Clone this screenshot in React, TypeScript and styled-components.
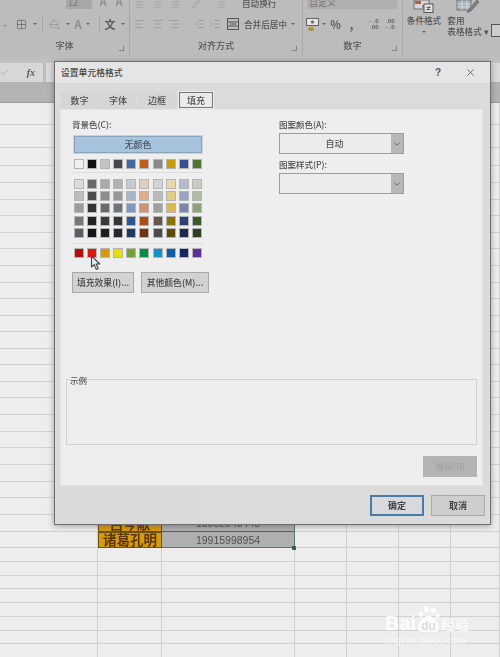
import React from "react";
import styled, { createGlobalStyle } from "styled-components";
import {
  Grid2x2, PaintBucket, AlignLeft, AlignCenter, AlignRight, IndentIncrease, IndentDecrease,
  ChevronDown, Check, X, AlignJustify, Pencil,
} from "lucide-react";

const Global = createGlobalStyle`
  html, body { margin: 0; padding: 0; background: #e8e8e8; }
  * { box-sizing: border-box; }
`;

const FONT = `"Noto Sans CJK SC", "Liberation Sans", sans-serif`;

const Page = styled.div`
  position: relative;
  width: 500px;
  height: 657px;
  overflow: hidden;
  font-family: ${FONT};
  background: #ececec;
`;
const Blurred = styled.div`
  width: 500px;
  height: 657px;
  filter: blur(0.5px);
  display: flex;
  flex-direction: column;
`;

/* ---------- ribbon ---------- */
const Ribbon = styled.div`
  height: 55px;
  display: flex;
  background: #bdbcbd;
  color: #5d5d5d;
  flex: none;
`;
const Group = styled.div<{ $w: number }>`
  position: relative;
  width: ${(p) => p.$w}px;
  flex: none;
  display: flex;
  flex-direction: column;
  border-right: 1px solid #a9a8a9;
`;
const TopRow = styled.div`
  height: 11px;
  display: flex;
  align-items: flex-end;
  overflow: hidden;
  padding-bottom: 2px;
`;
const MidRow = styled.div`
  height: 26px;
  display: flex;
  align-items: center;
`;
const GroupLabel = styled.div`
  height: 18px;
  font-size: 9px;
  line-height: 18px;
  text-align: center;
  color: #565656;
  font-weight: 500;
`;
const Launcher = styled.span`
  position: absolute;
  right: 5px;
  bottom: 4px;
  width: 5px;
  height: 5px;
  border-right: 1px solid #858585;
  border-bottom: 1px solid #858585;
`;
const Tool = styled.span<{ $w: number }>`
  width: ${(p) => p.$w}px;
  flex: none;
  display: inline-flex;
  align-items: center;
  justify-content: center;
  font-size: 11px;
  font-weight: 700;
  color: #5c5c5c;
`;
const Faint = styled(Tool)`
  color: #8d8d8d;
`;
const Decimal = styled.span`
  display: flex;
  flex-direction: column;
  align-items: flex-end;
  font-family: "Liberation Sans", sans-serif;
  font-size: 6px;
  line-height: 6px;
  font-weight: 700;
  color: #5c5c5c;
`;
const Caret = styled.span`
  width: 0;
  height: 0;
  flex: none;
  margin: 0 1px;
  border-left: 2px solid transparent;
  border-right: 2px solid transparent;
  border-top: 2px solid #666;
`;
const Divider = styled.span`
  width: 1px;
  height: 14px;
  background: #a5a4a5;
  flex: none;
`;
const MergeText = styled.span`
  font-size: 8.6px;
  font-weight: 500;
  color: #555;
  white-space: nowrap;
  margin: 0 3px;
`;
const FontBox = styled.span`
  width: 26px;
  height: 16px;
  margin-left: 66px;
  background: #a9a8a9;
  font-size: 9px;
  line-height: 20px;
  color: #777;
  padding-left: 2px;
  flex: none;
`;
const FormatBox = styled.span`
  width: 90px;
  height: 16px;
  margin-left: 4px;
  background: #b0afb0;
  font-size: 9px;
  line-height: 20px;
  color: #777;
  padding-left: 2px;
  flex: none;
`;
const StyleCol = styled.div<{ $w: number }>`
  width: ${(p) => p.$w}px;
  flex: none;
  display: flex;
  flex-direction: column;
  align-items: center;
  font-size: 8.6px;
  line-height: 11px;
  font-weight: 500;
  color: #555;
  white-space: nowrap;
`;
const StyleIcon = styled.div`
  height: 13px;
  display: flex;
  align-items: flex-end;
  margin-bottom: 2px;
  overflow: hidden;
`;
const StyleCaret = styled(Caret)`
  margin-top: 5px;
`;
const EdgeBox = styled.span`
  width: 12px;
  height: 13px;
  margin-top: 24px;
  border: 1.5px solid #555;
  background: #ccc;
  flex: none;
`;

/* ---------- formula bar ---------- */
const Gap = styled.div`
  height: 8px;
  flex: none;
  background: linear-gradient(#bdbcbd, #c4c3c4);
`;
const FormulaBar = styled.div`
  height: 19px;
  flex: none;
  display: flex;
  gap: 3px;
  background: #bdbcbd;
`;
const FormulaBox = styled.div`
  width: 43px;
  display: flex;
  align-items: center;
  justify-content: space-between;
  padding: 0 8px 0 0;
  background: #d8d7d8;
  color: #8c8c8c;
`;
const Fx = styled.span`
  font-family: "Liberation Serif", serif;
  font-style: italic;
  font-weight: 700;
  font-size: 10px;
  color: #555;
`;
const FormulaInput = styled.div`
  flex: 1;
  background: #dad9da;
`;
const ColumnHead = styled.div`
  height: 21px;
  flex: none;
  background: #b3b3b3;
  border-bottom: 1px solid #9c9c9c;
`;

/* ---------- sheet ---------- */
const Sheet = styled.div`
  flex: 1;
  background: #ededed;
  overflow: hidden;
`;
const Row = styled.div<{ $h: number }>`
  height: ${(p) => p.$h}px;
  display: grid;
  grid-template-columns: 98px 64px 133px 52px 52px 52px 49px;
  border-bottom: 1px solid #d2d2d2;
`;
const Cell = styled.div`
  border-right: 1px solid #d0d0d0;
  margin-bottom: -1px;
`;
const NameCell = styled.div`
  margin-bottom: -1px;
  background: #d69a0d;
  border: 1px solid #6d5110;
  display: flex;
  align-items: center;
  justify-content: center;
  font-size: 13.5px;
  font-weight: 700;
  line-height: 1;
  color: #5c3606;
  overflow: hidden;
`;
const PhoneCell = styled.div<{ $last?: boolean }>`
  margin-bottom: -1px;
  background: #b0afb0;
  border-right: 1px solid #4f7a6c;
  border-bottom: 1px solid ${(p) => (p.$last ? "#4f7a6c" : "#5a5a5a")};
  display: flex;
  align-items: center;
  justify-content: center;
  font-family: "Liberation Sans", sans-serif;
  font-size: 10.5px;
  color: #4f4f4f;
  overflow: hidden;
`;
const Handle = styled.span`
  position: absolute;
  left: 292px;
  top: 546px;
  width: 4px;
  height: 4px;
  background: #3f5f55;
`;

/* ---------- dialog ---------- */
const Dialog = styled.div`
  position: absolute;
  left: 54px;
  top: 61px;
  width: 437px;
  height: 464px;
  background: #dcdbdb;
  border: 1px solid #6f6f6f;
  box-shadow: 0 1px 6px rgba(60, 60, 60, 0.45);
  display: flex;
  flex-direction: column;
  filter: blur(0.5px);
  color: #4a4a4a;
`;
const TitleBar = styled.div`
  height: 21px;
  flex: none;
  display: flex;
  align-items: center;
  padding: 0 14px 0 6px;
  background: #e6e5e5;
  font-size: 8.8px;
  font-weight: 500;
  color: #444;
`;
const TitleText = styled.span`
  flex: 1;
`;
const HelpMark = styled.span`
  font-family: "Liberation Sans", sans-serif;
  font-size: 10px;
  font-weight: 700;
  color: #555;
  margin-right: 24px;
`;
const TabStrip = styled.div`
  height: 26px;
  flex: none;
  display: flex;
  align-items: flex-end;
  padding-left: 6px;
`;
const Tab = styled.div<{ $w: number; $active?: boolean }>`
  width: ${(p) => p.$w}px;
  height: ${(p) => (p.$active ? 16 : 18)}px;
  flex: none;
  margin: ${(p) => (p.$active ? "0 1px 1px 2px" : "0 1px 0 0")};
  display: flex;
  align-items: center;
  justify-content: center;
  font-size: 9px;
  font-weight: 500;
  color: #505050;
  background: ${(p) => (p.$active ? "#ebebeb" : "#d7d6d6")};
  border: ${(p) => (p.$active ? "1px solid #777" : "none")};
  outline: ${(p) => (p.$active ? "1px solid #ededed" : "none")};
`;
const Panel = styled.div`
  margin: 0 7px 0 5px;
  height: 377px;
  flex: none;
  background: #eeeeee;
  display: flex;
  flex-direction: column;
  padding: 7px 5px 0 5px;
  border: 1px solid #e4e4e4;
`;
const Columns = styled.div`
  height: 252px;
  flex: none;
  display: flex;
`;
const LeftCol = styled.div`
  width: 213px;
  flex: none;
  padding-left: 6px;
  display: flex;
  flex-direction: column;
`;
const RightCol = styled.div`
  flex: 1;
  display: flex;
  flex-direction: column;
`;
const FieldLabel = styled.div`
  height: 14px;
  font-size: 8.5px;
  line-height: 14px;
  font-weight: 500;
  color: #4d4d4d;
`;
const NoColor = styled.div`
  margin: 5px 0 0 2px;
  width: 128px;
  height: 17px;
  flex: none;
  background: #a6c4de;
  border: 1px solid #8ba6bc;
  outline: 1px solid #c8d3dc;
  display: flex;
  align-items: center;
  justify-content: center;
  font-size: 9px;
  font-weight: 500;
  color: #4b5560;
`;
const SwatchGrid = styled.div<{ $mt: number }>`
  display: grid;
  grid-template-columns: repeat(10, 10px);
  column-gap: 3.1px;
  row-gap: 2.2px;
  margin: ${(p) => p.$mt}px 0 0 2px;
`;
const Swatch = styled.span<{ $c: string }>`
  width: 10px;
  height: 10px;
  background: ${(p) => p.$c};
  border: 1px solid #b5b5b5;
`;
const Rule = styled.div<{ $mt: number }>`
  height: 1px;
  width: 131px;
  margin-top: ${(p) => p.$mt}px;
  background: #dddddd;
`;
const Buttons = styled.div`
  display: flex;
  gap: 7px;
  margin-top: 14px;
`;
const GreyButton = styled.div<{ $w: number }>`
  width: ${(p) => p.$w}px;
  height: 21px;
  flex: none;
  background: #d3d2d2;
  border: 1px solid #a9a9a9;
  display: flex;
  align-items: center;
  justify-content: center;
  font-size: 8.8px;
  font-weight: 500;
  color: #474747;
  white-space: nowrap;
`;
const Select = styled.div`
  width: 125px;
  height: 21px;
  flex: none;
  margin: 2px 0 3px;
  border: 1px solid #9d9d9d;
  background: #ececec;
  display: flex;
  font-size: 9px;
  font-weight: 500;
  color: #555;
`;
const SelectValue = styled.div`
  flex: 1;
  display: flex;
  align-items: center;
  justify-content: center;
  padding-right: 2px;
`;
const SelectArrow = styled.div`
  width: 12px;
  flex: none;
  background: #b8b7b7;
  display: flex;
  align-items: center;
  justify-content: center;
  color: #555;
`;
const Sample = styled.div`
  position: relative;
  height: 66px;
  margin-top: 10px;
  flex: none;
  border: 1px solid #d2d2d2;
  background: #eeeeee;
`;
const SampleLegend = styled.span`
  position: absolute;
  left: 3px;
  top: -6px;
  font-size: 8.5px;
  line-height: 12px;
  font-weight: 500;
  color: #555;
  background: #eeeeee;
`;
const ClearRow = styled.div`
  display: flex;
  justify-content: flex-end;
  margin-top: 11px;
`;
const ClearButton = styled.div`
  width: 54px;
  height: 21px;
  background: #b4b3b3;
  display: flex;
  align-items: center;
  justify-content: center;
  font-size: 9px;
  color: #a0a0a0;
`;
const Footer = styled.div`
  flex: 1;
  display: flex;
  justify-content: flex-end;
  align-items: flex-start;
  gap: 7px;
  padding: 9px 5px 0 0;
  background: linear-gradient(90deg, #dadada, #dcdbdb);
`;
const FootButton = styled.div<{ $primary?: boolean }>`
  width: 54px;
  height: 21px;
  background: ${(p) => (p.$primary ? "#d8d9dc" : "#cfcece")};
  border: ${(p) => (p.$primary ? "2px solid #4a7ba6" : "1px solid #a9a9a9")};
  display: flex;
  align-items: center;
  justify-content: center;
  font-size: 9px;
  font-weight: 700;
  color: #464646;
`;

/* ---------- overlays ---------- */
const Pointer = styled.svg`
  position: absolute;
  left: 90px;
  top: 255px;
  filter: blur(0.35px);
`;
const Mark = styled.div`
  position: absolute;
  left: 385px;
  top: 604px;
  width: 96px;
  color: rgba(255, 255, 255, 0.82);
  filter: blur(0.3px);
`;
const MarkTop = styled.div`
  display: flex;
  align-items: flex-end;
  height: 29px;
  font-family: "Liberation Sans", sans-serif;
  font-weight: 700;
  font-size: 20px;
  line-height: 20px;
`;
const PawWrap = styled.span`
  position: relative;
  display: inline-flex;
  width: 25px;
  height: 28px;
  flex: none;
  align-items: flex-end;
  justify-content: center;
`;
const PawGlyph = styled.svg`
  position: absolute;
  left: 0;
  top: 0;
`;
const PawText = styled.span`
  position: relative;
  font-size: 12px;
  line-height: 14px;
  color: #dcdcdc;
`;
const MarkCn = styled.span`
  font-family: ${FONT};
  font-size: 14px;
  line-height: 18px;
  font-weight: 500;
`;
const MarkUrl = styled.div`
  font-family: "Liberation Sans", sans-serif;
  font-size: 10px;
  line-height: 12px;
  color: rgba(255, 255, 255, 0.6);
  margin-top: 2px;
`;

/* ---------- data ---------- */
const THEME = ["#f0f0f0", "#111111", "#c3c3c3", "#44474c", "#41699f", "#c05f17", "#8a8a8a", "#c89b08", "#34508f", "#4f7434"];
const TINTS = [
  "#dcdcdc", "#6a6a6a", "#aaaaaa", "#b0b2b4", "#c6cbd2", "#e3cdbd", "#d4d4d4", "#ead9a8", "#b4bbcf", "#c6cfbe",
  "#bcbcbc", "#4c4c4c", "#8e8e8e", "#98999c", "#a9b5c5", "#e0ae8a", "#bbbbbb", "#e2cc80", "#9ba4c0", "#aebba0",
  "#9c9c9c", "#333333", "#6a6a6a", "#6f7278", "#7f98bf", "#d09270", "#a0a0a0", "#dab94e", "#7b85ad", "#8fa37a",
  "#777777", "#222222", "#3a3a3a", "#333539", "#2b5690", "#a84c0f", "#67554a", "#8a7005", "#2f3f75", "#3b5a2c",
  "#5a5f66", "#151515", "#1e1e1e", "#26282b", "#1f3c5e", "#70350c", "#4c4c4c", "#5c4b05", "#1f2850", "#2f3e25",
];
const STANDARD = ["#b50d0d", "#e31414", "#d99a0a", "#e8dc10", "#76a03a", "#0c8a48", "#1890c8", "#0a5fa8", "#142660", "#5c2f98"];

const ROW_LINES = [125, 148, 166, 183, 200, 216, 233, 249, 266, 283, 299, 316, 332, 349, 365, 382, 398, 415, 432, 448, 465, 482, 498, 515, 532, 548, 562, 576, 589, 603, 617, 631, 644, 658];
const ROWS = ROW_LINES.map((y, i) => y - (i === 0 ? 103 : ROW_LINES[i - 1]));

const Swatches = ({ colors, mt }: { colors: string[]; mt: number }) => (
  <SwatchGrid $mt={mt}>
    {colors.map((c, i) => (
      <Swatch key={i} $c={c} />
    ))}
  </SwatchGrid>
);

const MergeIcon = () => (
  <svg width="12" height="12" viewBox="0 0 12 12" fill="none" stroke="#555" strokeWidth="1">
    <rect x="0.5" y="0.5" width="11" height="11" />
    <path d="M0.5 4H11.5M0.5 8H11.5M3 6H9" />
  </svg>
);
const CurrencyIcon = () => (
  <svg width="13" height="13" viewBox="0 0 13 13">
    <rect x="0.5" y="0.5" width="12" height="7" fill="#e4e4e4" stroke="#666" />
    <circle cx="6.5" cy="4" r="1.6" fill="#666" />
    <ellipse cx="5" cy="10" rx="3" ry="1.4" fill="#b8a24a" />
    <ellipse cx="5" cy="11.6" rx="3" ry="1.2" fill="#a08c3a" />
  </svg>
);
const ConditionalIcon = () => (
  <svg width="22" height="13" viewBox="0 0 22 13">
    <rect x="1" y="0" width="15" height="9" fill="#d8d8d8" stroke="#6d6d6d" />
    <rect x="2" y="1" width="6" height="3" fill="#a8614a" />
    <rect x="9" y="5" width="6" height="3" fill="#8a94a8" />
    <rect x="11" y="4" width="9" height="8.5" fill="#e6e6e6" stroke="#555" />
    <path d="M14 10.5L17 6M13.5 7.5H17.5M13.5 9.5H17.5" stroke="#444" strokeWidth="0.8" />
  </svg>
);
const TableStyleIcon = () => (
  <svg width="24" height="13" viewBox="0 0 24 13">
    <rect x="1" y="0" width="14" height="10" fill="#a9b3c0" stroke="#727272" />
    <path d="M1 4H15M1 7H15M6 0V10M11 0V10" stroke="#e0e0e0" strokeWidth="0.7" />
    <path d="M21 0L13 9L11 12.5L15 11L23 2Z" fill="#7f7f7f" stroke="#5c5c5c" strokeWidth="0.6" />
  </svg>
);

export default function App() {
  return (
    <Page>
      <Global />
      <Blurred>
        <Ribbon>
          <Group $w={130}>
            <TopRow>
              <FontBox>12</FontBox>
              <Faint $w={22}>A</Faint>
              <Faint $w={10}>A</Faint>
            </TopRow>
            <MidRow>
              <Faint $w={10}>-</Faint>
              <Tool $w={22}><Grid2x2 size={11} strokeWidth={1.4} /></Tool>
              <Caret />
              <Faint $w={4} />
              <Divider />
              <Faint $w={22}><PaintBucket size={11} strokeWidth={1.3} /></Faint>
              <Caret />
              <Faint $w={14}>A</Faint>
              <Caret />
              <Faint $w={8} />
              <Divider />
              <Tool $w={20}>文</Tool>
              <Caret />
            </MidRow>
            <GroupLabel>字体</GroupLabel>
            <Launcher />
          </Group>
          <Group $w={173}>
            <TopRow>
              <Faint $w={18}><AlignJustify size={9} strokeWidth={1.2} /></Faint>
              <Faint $w={18}><AlignJustify size={9} strokeWidth={1.2} /></Faint>
              <Faint $w={18}><AlignJustify size={9} strokeWidth={1.2} /></Faint>
              <Faint $w={22}><Pencil size={9} strokeWidth={1.2} /></Faint>
              <Faint $w={33}><AlignLeft size={9} strokeWidth={1.2} /></Faint>
              <MergeText>自动换行</MergeText>
            </TopRow>
            <MidRow>
              <Faint $w={20}><AlignLeft size={12} strokeWidth={1.2} /></Faint>
              <Faint $w={16}><AlignCenter size={12} strokeWidth={1.2} /></Faint>
              <Faint $w={16}><AlignRight size={12} strokeWidth={1.2} /></Faint>
              <Faint $w={9} />
              <Faint $w={16}><IndentDecrease size={12} strokeWidth={1.2} /></Faint>
              <Faint $w={16}><IndentIncrease size={12} strokeWidth={1.2} /></Faint>
              <Faint $w={2} />
              <Tool $w={16}><MergeIcon /></Tool>
              <MergeText>合并后居中</MergeText>
              <Caret />
            </MidRow>
            <GroupLabel>对齐方式</GroupLabel>
            <Launcher />
          </Group>
          <Group $w={100}>
            <TopRow>
              <FormatBox>自定义</FormatBox>
            </TopRow>
            <MidRow>
              <Tool $w={18}><CurrencyIcon /></Tool>
              <Caret />
              <Tool $w={17}>%</Tool>
              <Tool $w={15}>,</Tool>
              <Faint $w={6} />
              <Tool $w={16}><Decimal><span>←.0</span><span>.00</span></Decimal></Tool>
              <Tool $w={16}><Decimal><span>.00</span><span>→.0</span></Decimal></Tool>
            </MidRow>
            <GroupLabel>数字</GroupLabel>
            <Launcher />
          </Group>
          <StyleCol $w={42}>
            <StyleIcon><ConditionalIcon /></StyleIcon>
            条件格式
            <StyleCaret />
          </StyleCol>
          <StyleCol $w={46}>
            <StyleIcon><TableStyleIcon /></StyleIcon>
            套用
            <br />
            表格格式 ▾
          </StyleCol>
          <EdgeBox />
        </Ribbon>
        <Gap />
        <FormulaBar>
          <FormulaBox>
            <Check size={9} strokeWidth={1.5} />
            <Fx>fx</Fx>
          </FormulaBox>
          <FormulaInput />
        </FormulaBar>
        <ColumnHead />
        <Sheet>
          {ROWS.map((h, i) => {
            const y = ROW_LINES[i];
            const isName = y === 532 || y === 548;
            return (
              <Row key={y} $h={h}>
                <Cell />
                {isName ? (
                  <NameCell>{y === 532 ? "吕岑献" : "诸葛孔明"}</NameCell>
                ) : (
                  <Cell />
                )}
                {isName ? (
                  <PhoneCell $last={y === 548}>{y === 532 ? "13552545445" : "19915998954"}</PhoneCell>
                ) : (
                  <Cell />
                )}
                <Cell />
                <Cell />
                <Cell />
                <Cell />
              </Row>
            );
          })}
        </Sheet>
      </Blurred>
      <Handle />

      <Dialog>
        <TitleBar>
          <TitleText>设置单元格格式</TitleText>
          <HelpMark>?</HelpMark>
          <X size={11} strokeWidth={1.6} />
        </TitleBar>
        <TabStrip>
          <Tab $w={37}>数字</Tab>
          <Tab $w={38}>字体</Tab>
          <Tab $w={38}>边框</Tab>
          <Tab $w={34} $active>填充</Tab>
        </TabStrip>
        <Panel>
          <Columns>
            <LeftCol>
              <FieldLabel>背景色(C):</FieldLabel>
              <NoColor>无颜色</NoColor>
              <Swatches colors={THEME} mt={6} />
              <Rule $mt={3} />
              <Swatches colors={TINTS} mt={6} />
              <Rule $mt={5} />
              <Swatches colors={STANDARD} mt={4} />
              <Buttons>
                <GreyButton $w={62}>填充效果(I)...</GreyButton>
                <GreyButton $w={68}>其他颜色(M)...</GreyButton>
              </Buttons>
            </LeftCol>
            <RightCol>
              <FieldLabel>图案颜色(A):</FieldLabel>
              <Select>
                <SelectValue>自动</SelectValue>
                <SelectArrow><ChevronDown size={10} strokeWidth={2} /></SelectArrow>
              </Select>
              <FieldLabel>图案样式(P):</FieldLabel>
              <Select>
                <SelectValue />
                <SelectArrow><ChevronDown size={10} strokeWidth={2} /></SelectArrow>
              </Select>
            </RightCol>
          </Columns>
          <Sample>
            <SampleLegend>示例</SampleLegend>
          </Sample>
          <ClearRow>
            <ClearButton>清除(R)</ClearButton>
          </ClearRow>
        </Panel>
        <Footer>
          <FootButton $primary>确定</FootButton>
          <FootButton>取消</FootButton>
        </Footer>
      </Dialog>

      <Pointer width="12" height="16" viewBox="0 0 12 16">
        <path d="M1.5 0.8 L1.5 12 L4.2 9.6 L6.2 14.4 L8.2 13.5 L6.2 9 L9.8 9 Z" fill="#e8e8e8" stroke="#444" strokeWidth="1.1" strokeLinejoin="round" />
      </Pointer>

      <Mark>
        <MarkTop>
          Bai
          <PawWrap>
            <PawGlyph width="25" height="28" viewBox="0 0 26 28">
              <ellipse cx="5" cy="9" rx="2.4" ry="3" fill="currentColor" />
              <ellipse cx="11" cy="4" rx="2.8" ry="3.4" fill="currentColor" />
              <ellipse cx="18" cy="5" rx="2.6" ry="3.2" fill="currentColor" />
              <ellipse cx="22.5" cy="11" rx="2.2" ry="2.8" fill="currentColor" />
              <path d="M13 10 C17 10 24 17 24 23 C24 28 18 28 13 27 C8 28 2 28 2 23 C2 17 9 10 13 10 Z" fill="currentColor" />
            </PawGlyph>
            <PawText>du</PawText>
          </PawWrap>
          <MarkCn>经验</MarkCn>
        </MarkTop>
        <MarkUrl>jingyan.baidu.com</MarkUrl>
      </Mark>
    </Page>
  );
}
